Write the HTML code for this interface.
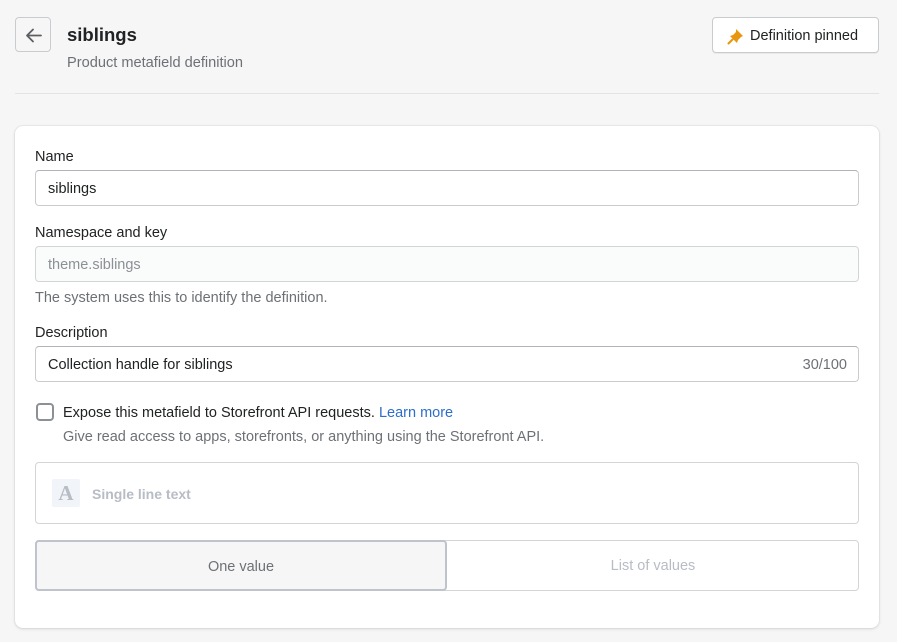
<!DOCTYPE html>
<html><head><style>
*{box-sizing:border-box;margin:0;padding:0}
body{width:897px;height:642px;background:#f6f6f7;font-family:"Liberation Sans",sans-serif;color:#202223;position:relative;overflow:hidden;font-size:14.5px}
.abs{position:absolute}
.back{left:15px;top:17px;width:36px;height:35px;border:1px solid #c9cccf;border-radius:4px;background:#f6f6f7}
.title{left:67px;top:24px;font-size:18.5px;font-weight:bold}
.sub{left:67px;top:55px;font-size:14.6px;color:#6d7175}
.pin{left:712px;top:17px;width:167px;height:36px;border:1px solid #c9cccf;border-radius:4px;background:#fff;box-shadow:0 1px 0 rgba(0,0,0,.05)}
.pin span{position:absolute;left:37px;top:10px;font-size:14.5px}
.hr{left:15px;top:93px;width:864px;height:1px;background:#e1e3e5}
.card{left:15px;top:126px;width:864px;height:502px;background:#fff;border-radius:8px;box-shadow:0 0 0 1px rgba(63,63,68,.05),0 1px 3px rgba(63,63,68,.15)}
.lbl{left:35px}
.inp{left:35px;width:824px;height:36px;border:1px solid #c9cccf;border-top-color:#aeb4b9;border-radius:4px;padding:0 12px;line-height:36px}
.help{left:35px;color:#6d7175}
</style></head><body>
<div class="abs back"><svg width="36" height="35" viewBox="0 0 36 35"><path d="M25 17.5H11M17 11.5l-6 6 6 6" stroke="#5c5f62" stroke-width="1.8" fill="none" stroke-linecap="round" stroke-linejoin="round"/></svg></div>
<div class="abs title">siblings</div>
<div class="abs sub">Product metafield definition</div>
<div class="abs pin"><svg class="abs" style="left:14px;top:9px" width="18" height="18" viewBox="0 0 18 18"><path d="M9 2l7 7-2 1-3 3-1 3-7-7 3-1 3-3z" fill="#e8950f"/><path d="M5.5 12.5L1.5 16.5" stroke="#e8950f" stroke-width="2" stroke-linecap="round"/></svg><span>Definition pinned</span></div>
<div class="abs hr"></div>
<div class="abs card"></div>
<div class="abs lbl" style="top:149px">Name</div>
<div class="abs inp" style="top:170px">siblings</div>
<div class="abs lbl" style="top:225px">Namespace and key</div>
<div class="abs inp" style="top:246px;background:#fafbfb;border-color:#d2d5d8;color:#8c9196">theme.siblings</div>
<div class="abs help" style="top:290px">The system uses this to identify the definition.</div>
<div class="abs lbl" style="top:325px">Description</div>
<div class="abs inp" style="top:346px">Collection handle for siblings<span style="position:absolute;right:11px;color:#6d7175">30/100</span></div>
<div class="abs" style="left:36px;top:403px;width:18px;height:18px;border:2px solid #8c9196;border-radius:4px"></div>
<div class="abs" style="left:63px;top:405px">Expose this metafield to Storefront API requests. <span style="color:#2c6ecb">Learn more</span></div>
<div class="abs help" style="left:63px;top:429px">Give read access to apps, storefronts, or anything using the Storefront API.</div>
<div class="abs" style="left:35px;top:462px;width:824px;height:62px;border:1px solid #d2d5d8;border-radius:4px"></div>
<div class="abs" style="left:52px;top:479px;width:28px;height:28px;background:#f1f4f8;border-radius:2px;color:#b7bcc5;font-family:'Liberation Serif',serif;font-weight:bold;font-size:21px;text-align:center;line-height:28px">A</div>
<div class="abs" style="left:92px;top:486px;color:#b7bcc5;font-weight:bold;font-size:14px">Single line text</div>
<div class="abs" style="left:35px;top:540px;width:824px;height:51px;border:1px solid #d2d5d8;border-radius:4px"></div>
<div class="abs" style="left:35px;top:540px;width:412px;height:51px;border:2px solid #bfc3cc;border-radius:4px;background:#f6f6f7;text-align:center;line-height:51px;color:#6d7175">One value</div>
<div class="abs" style="left:447px;top:540px;width:412px;height:51px;text-align:center;line-height:53px;color:#b7bcc5">List of values</div>
</body></html>
